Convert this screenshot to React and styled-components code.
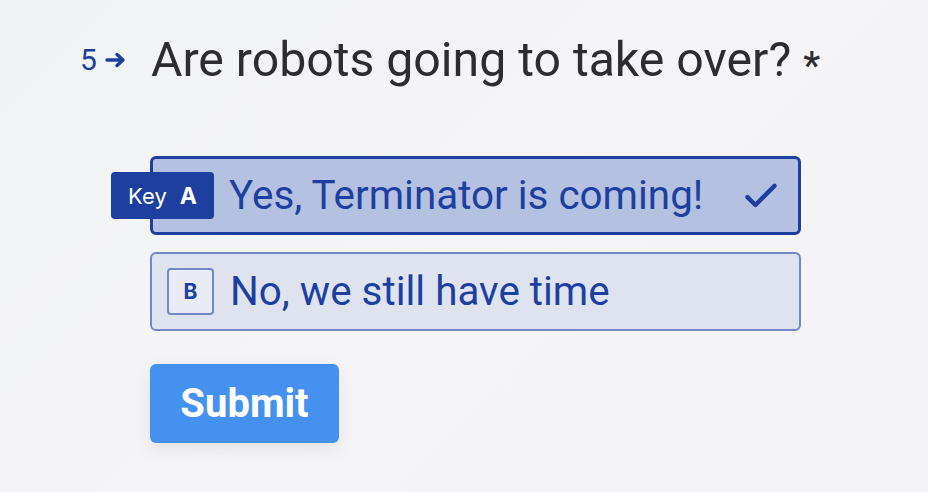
import React from 'react';
import styled, { createGlobalStyle } from 'styled-components';

const GlobalStyle = createGlobalStyle`
  html, body {
    margin: 0;
    padding: 0;
  }
  body {
    background: linear-gradient(135deg, #f1f2f4 0%, #f5f5f7 50%, #f3f3f5 100%);
    font-family: Roboto, 'Liberation Sans', sans-serif;
    width: 928px;
    height: 492px;
    overflow: hidden;
  }
`;

const Page = styled.div`
  padding: 34px 0 0 80px;
`;

const QuestionRow = styled.div`
  display: flex;
  align-items: center;
`;

const Counter = styled.div`
  width: 71px;
  display: flex;
  align-items: center;
  gap: 8px;
  color: #1c3fa0;
  font-size: 30px;
  line-height: 1;
`;

const Title = styled.h1`
  margin: 0;
  display: flex;
  align-items: center;
  font-weight: 400;
  font-size: 48.2px;
  line-height: 52px;
  color: #2d2d30;
`;

const Star = styled.span`
  margin-left: 12px;
  font-size: 38px;
  font-weight: 500;
  line-height: 1;
  transform: translateY(6px);
`;

const Answers = styled.div`
  margin-left: 70px;
  margin-top: 70px;
  display: flex;
  flex-direction: column;
  gap: 17px;
  width: 651px;
`;

const Choice = styled.div`
  position: relative;
  box-sizing: border-box;
  height: 79px;
  display: flex;
  align-items: center;
  gap: 16px;
  padding: 0 24px 0 ${(p) => (p.$selected ? '13px' : '15px')};
  border-radius: 6px;
  border: ${(p) => (p.$selected ? '3px solid #1c3fa0' : '2px solid #7387c4')};
  background: ${(p) => (p.$selected ? '#b4c1e0' : '#dfe3f0')};
  color: #1c3fa0;
  font-size: 40.4px;
`;

const KeyBox = styled.div`
  box-sizing: border-box;
  width: 47px;
  height: 47px;
  flex: none;
  display: flex;
  align-items: center;
  justify-content: center;
  border: 2px solid #7387c4;
  border-radius: 4px;
  background: #e9ecf6;
  font-family: Inter, 'Liberation Sans', sans-serif;
  font-weight: 700;
  font-size: 21px;
  color: #1c3fa0;
`;

const KeyTag = styled.div`
  position: absolute;
  left: -42px;
  top: 13px;
  box-sizing: border-box;
  width: 103px;
  height: 47px;
  display: flex;
  align-items: center;
  justify-content: center;
  gap: 13px;
  border-radius: 4px;
  background: #1c3fa0;
  color: #fff;
  font-family: Inter, 'Liberation Sans', sans-serif;
  font-size: 22px;
  b {
    font-weight: 700;
    font-size: 23px;
  }
`;

const KeySpacer = styled.div`
  width: 47px;
  flex: none;
`;

const Label = styled.span`
  flex: 1;
`;

const Check = styled.svg`
  width: 36px;
  height: 36px;
  flex: none;
  margin-right: -5px;
`;

const Submit = styled.button`
  margin: 33px 0 0 70px;
  width: 189px;
  height: 79px;
  border: none;
  border-radius: 6px;
  background: #4591ef;
  color: #fff;
  font-family: Roboto, 'Liberation Sans', sans-serif;
  font-weight: 700;
  font-size: 40px;
  box-shadow: 0 6px 18px rgba(0, 0, 0, 0.08);
  cursor: pointer;
`;

export default function App() {
  return (
    <>
      <GlobalStyle />
      <Page>
        <QuestionRow>
          <Counter>
            5
            <svg width="22" height="16" viewBox="0 0 22 16">
              <path d="M2 8h16M12 2.5 18 8l-6 5.5" fill="none" stroke="#1c3fa0" strokeWidth="3.4" strokeLinecap="round" strokeLinejoin="round" />
            </svg>
          </Counter>
          <Title>
            Are robots going to take over?<Star>*</Star>
          </Title>
        </QuestionRow>
        <Answers>
          <Choice $selected>
            <KeyTag>
              Key <b>A</b>
            </KeyTag>
            <KeySpacer />
            <Label>Yes, Terminator is coming!</Label>
            <Check viewBox="0 0 32 32">
              <path d="M4 17 11 24 28 7" fill="none" stroke="#1c3fa0" strokeWidth="3.8" strokeLinecap="round" strokeLinejoin="round" />
            </Check>
          </Choice>
          <Choice>
            <KeyBox>B</KeyBox>
            <Label>No, we still have time</Label>
          </Choice>
        </Answers>
        <Submit>Submit</Submit>
      </Page>
    </>
  );
}
